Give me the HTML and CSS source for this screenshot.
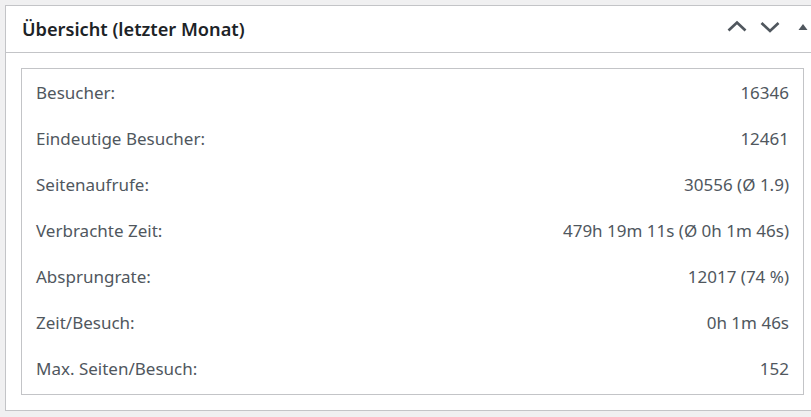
FILE: index.html
```html
<!DOCTYPE html>
<html lang="de">
<head>
  <meta charset="UTF-8" />
  <meta name="viewport" content="width=device-width, initial-scale=1.0"/>
  <title>Übersicht</title>
  <link rel="stylesheet" href="styles.css">
</head>
<body>
  <div class="postbox">
    <div class="postbox-header">
      <h2 class="hndle">Übersicht (letzter Monat)</h2>
      <div class="handle-actions">
        <button class="handle-btn" aria-label="Nach oben">
          <svg width="20" height="20" viewBox="0 0 20 20"><polyline points="1.5,13.5 10,5.5 18.5,13.5" fill="none" stroke="#50575e" stroke-width="2.7"/></svg>
        </button>
        <button class="handle-btn" aria-label="Nach unten">
          <svg width="20" height="20" viewBox="0 0 20 20"><polyline points="1.5,6 10,14 18.5,6" fill="none" stroke="#50575e" stroke-width="2.7"/></svg>
        </button>
        <button class="handle-btn" aria-label="Umschalten">
          <svg width="10" height="8" viewBox="0 0 10 8"><polygon points="0.5,7 5,1 9.5,7" fill="#50575e"/></svg>
        </button>
      </div>
    </div>
    <div class="inside">
      <div class="stats">
        <div class="row"><span>Besucher:</span><span>16346</span></div>
        <div class="row"><span>Eindeutige Besucher:</span><span>12461</span></div>
        <div class="row"><span>Seitenaufrufe:</span><span>30556 (Ø 1.9)</span></div>
        <div class="row"><span>Verbrachte Zeit:</span><span>479h 19m 11s (Ø 0h 1m 46s)</span></div>
        <div class="row"><span>Absprungrate:</span><span>12017 (74 %)</span></div>
        <div class="row"><span>Zeit/Besuch:</span><span>0h 1m 46s</span></div>
        <div class="row"><span>Max. Seiten/Besuch:</span><span>152</span></div>
      </div>
    </div>
  </div>
</body>
</html>
```

FILE: styles.css
```css
body {
  font-family: "Noto Sans", "Open Sans", sans-serif;
  margin: 0;
  padding: 5px;
  background: #f0f0f1;
  overflow: hidden;
  width: 830px;
}

.postbox {
  background: #fff;
  border: 1px solid #c3c4c7;
  width: 813px;
}

.postbox-header {
  display: flex;
  align-items: center;
  justify-content: space-between;
  height: 46px;
  border-bottom: 1px solid #c3c4c7;
}

.hndle {
  margin: 0;
  padding-left: 16px;
  font-size: 18.2px;
  font-weight: 600;
  color: #1d2327;
}

.handle-actions {
  display: flex;
  align-items: center;
  margin-top: -4px;
}

.handle-btn {
  border: none;
  background: none;
  padding: 0;
  width: 33px;
  height: 36px;
  display: flex;
  align-items: center;
  justify-content: center;
}

.inside {
  padding: 15px;
}

.stats {
  border: 1px solid #c3c4c7;
  padding: 0 14px 3px 14px;
}

.row {
  display: flex;
  justify-content: space-between;
  align-items: center;
  height: 46px;
  font-size: 17px;
  color: #50575e;
}
```
